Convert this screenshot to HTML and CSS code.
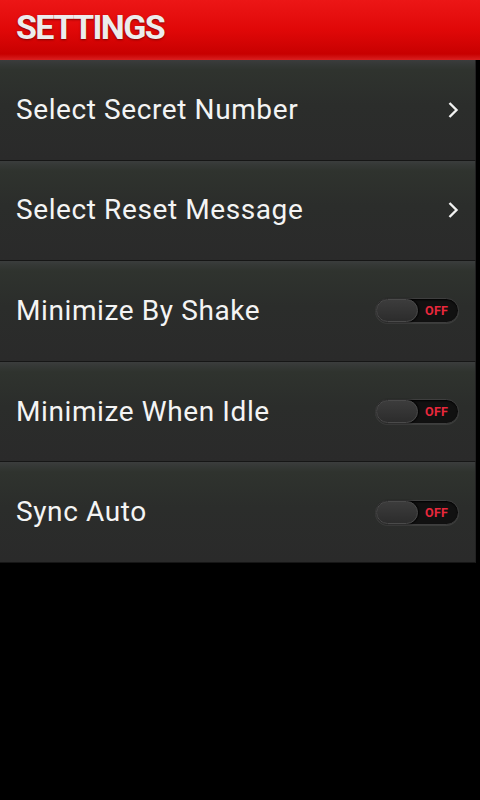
FILE: index.html
```html
<!DOCTYPE html>
<html>
<head>
<meta charset="utf-8">
<link rel="stylesheet" href="styles.css">
</head>
<body>
<div class="screen">
  <header class="header"><h1 class="title">SETTINGS</h1></header>
  <ul class="list">
    <li class="row"><span class="label">Select Secret Number</span>
      <svg class="chev" width="12" height="18" viewBox="0 0 12 18"><path d="M2.5 2 L9.5 9 L2.5 16" fill="none" stroke="#f2f2f2" stroke-width="2.4"/></svg></li>
    <li class="row"><span class="label">Select Reset Message</span>
      <svg class="chev" width="12" height="18" viewBox="0 0 12 18"><path d="M2.5 2 L9.5 9 L2.5 16" fill="none" stroke="#f2f2f2" stroke-width="2.4"/></svg></li>
    <li class="row"><span class="label">Minimize By Shake</span>
      <span class="toggle"><span class="knob"></span><span class="off">OFF</span></span></li>
    <li class="row"><span class="label">Minimize When Idle</span>
      <span class="toggle"><span class="knob"></span><span class="off">OFF</span></span></li>
    <li class="row"><span class="label">Sync Auto</span>
      <span class="toggle"><span class="knob"></span><span class="off">OFF</span></span></li>
  </ul>
</div>
</body>
</html>
```
FILE: styles.css
```css
html, body { margin: 0; padding: 0; background: #000; }
.screen { width: 480px; height: 800px; background: #000; font-family: Roboto, "Noto Sans", sans-serif; }
.header {
  height: 60px;
  background: linear-gradient(#ec1616 0%, #e00808 50%, #c80000 90%, #d82020 100%);
  display: flex; align-items: center;
  padding-left: 16px;
  box-sizing: border-box;
}
.title {
  margin: 0; font-size: 34px; font-weight: 700; letter-spacing: -1.6px;
  color: #ececec;
  text-shadow: 0 1px 2px rgba(90,0,0,0.7);
  line-height: 1;
  margin-top: -6px;
}
.list { list-style: none; margin: 0; padding: 0; width: 476px; }
.row {
  height: 100.6px; box-sizing: border-box;
  display: flex; align-items: center; justify-content: space-between;
  padding: 0 19px 0 16px;
  background: linear-gradient(#3b3d3d 0px, #353836 4px, #2f332e 10px, #2b2d2b 45%, #2a2a2a 100%);
  border-bottom: 1px solid #161616;
  border-right: 1px solid #222;
}
.label { color: #f4f4f4; font-size: 28px; letter-spacing: 0.6px; margin-top: -1px; }
.chev { display: block; margin-right: -3px; }
.toggle {
  width: 84px; height: 25px; box-sizing: border-box;
  border-radius: 13px;
  background: #111;
  border: 1px solid #3e3e3e;
  box-shadow: inset 0 1px 2px #000, 0 1px 0 rgba(255,255,255,0.08);
  display: flex; align-items: center;
  margin-right: -3px;
}
.knob {
  width: 42px; height: 23px; box-sizing: border-box;
  border-radius: 12px;
  background: linear-gradient(#3c3c3c, #2c2c2c);
  border: 1px solid #4a4a4a;
  box-shadow: 1px 0 2px #000;
}
.off {
  color: #e8283c; font-size: 12.5px; font-weight: 700;
  margin-left: 7px; letter-spacing: 0.3px;
}
```
